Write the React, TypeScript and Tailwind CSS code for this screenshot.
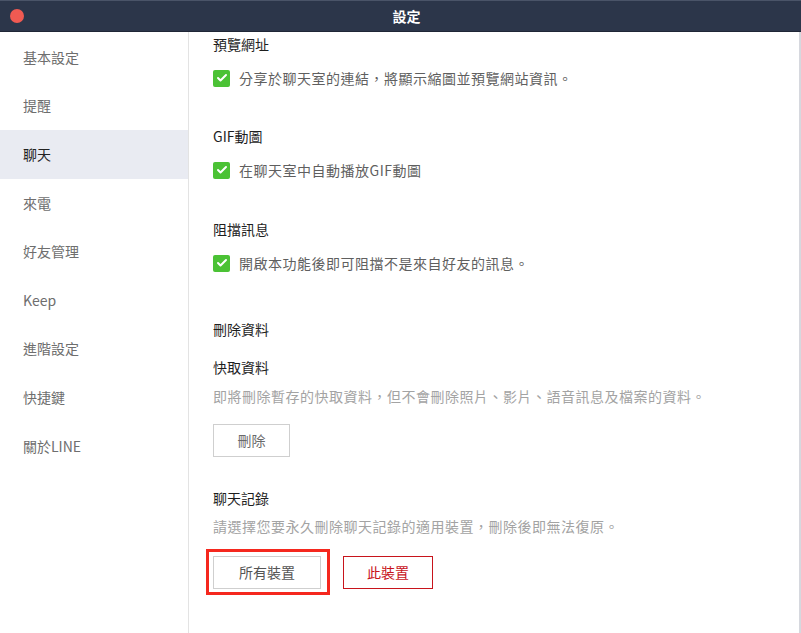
import { Check } from "lucide-react";

const menu = ["基本設定", "提醒", "聊天", "來電", "好友管理", "Keep", "進階設定", "快捷鍵", "關於LINE"];

const CheckRow = ({ text }: { text: string }) => (
    <div className="flex items-center gap-[9px] leading-[20px]">
        <span className="w-[17px] h-[17px] rounded-[2px] bg-[#4bc235] flex items-center justify-center">
            <Check className="w-[12px] h-[12px] text-white" strokeWidth={4} />
        </span>
        <span className="text-[14px] text-[#5f5f5f] tracking-[0.5px]">{text}</span>
    </div>
);

const App = () => {
    return (
        <div
            className="w-[801px] h-[633px] flex flex-col bg-white overflow-hidden relative"
            style={{ fontFamily: '"Noto Sans CJK TC", "Noto Sans", sans-serif' }}
        >
            {/* TITLE BAR */}
            <div className="h-[32px] shrink-0 bg-[#2c364a] border-t border-[#4a5468] border-b border-b-[#1f2636] flex items-center relative">
                <span className="ml-[10px] w-[14px] h-[14px] rounded-full bg-[#f05a52]" />
                <div className="absolute left-0 right-0 text-center text-white text-[14px] font-bold pl-[12px]">設定</div>
            </div>

            <div className="flex flex-1 min-h-0 border-r-2 border-[#d6d8de]">
                {/* SIDEBAR */}
                <div className="w-[189px] shrink-0 border-r border-[#e3e3e3] flex flex-col pt-px">
                    {menu.map((m) => (
                        <div
                            key={m}
                            className={
                                m === "聊天"
                                    ? "h-[48.6px] flex items-center pl-[23px] text-[14px] bg-[#e9ebf2] text-[#222]"
                                    : "h-[48.6px] flex items-center pl-[23px] text-[14px] text-[#6e6e6e]"
                            }
                        >
                            {m}
                        </div>
                    ))}
                </div>

                {/* CONTENT */}
                <div className="flex-1 pl-[24px] flex flex-col text-[#1e1e1e]">
                    <div className="text-[14px] leading-[20px] mt-[2px]">預覽網址</div>
                    <div className="mt-[14px]">
                        <CheckRow text="分享於聊天室的連結，將顯示縮圖並預覽網站資訊。" />
                    </div>

                    <div className="text-[14px] leading-[20px] mt-[38px]">GIF動圖</div>
                    <div className="mt-[14px]">
                        <CheckRow text="在聊天室中自動播放GIF動圖" />
                    </div>

                    <div className="text-[14px] leading-[20px] mt-[39px]">阻擋訊息</div>
                    <div className="mt-[14px]">
                        <CheckRow text="開啟本功能後即可阻擋不是來自好友的訊息。" />
                    </div>

                    <div className="text-[14px] leading-[20px] mt-[46px]">刪除資料</div>
                    <div className="text-[14px] leading-[20px] mt-[18px]">快取資料</div>
                    <div className="text-[14px] text-[#a3a3a3] leading-[20px] mt-[9px] tracking-[0.5px]">
                        即將刪除暫存的快取資料，但不會刪除照片、影片、語音訊息及檔案的資料。
                    </div>
                    <button
                        type="button"
                        className="mt-[18px] w-[77px] h-[33px] border border-[#cfcfcf] text-[14px] text-[#6a6a6a] bg-white"
                    >
                        刪除
                    </button>

                    <div className="text-[14px] leading-[20px] mt-[31px]">聊天記錄</div>
                    <div className="text-[14px] text-[#a3a3a3] leading-[20px] mt-[8px] tracking-[0.5px]">
                        請選擇您要永久刪除聊天記錄的適用裝置，刪除後即無法復原。
                    </div>
                    <div className="flex items-center gap-[13px] mt-[13px] -ml-[7px]">
                        <div className="border-[3px] border-[#f5281e] pt-[4px] pl-[4px] pr-[6px] pb-[3px]">
                            <button
                                type="button"
                                className="w-[108px] h-[33px] border border-[#cfcfcf] text-[14px] text-[#555] bg-white block"
                            >
                                所有裝置
                            </button>
                        </div>
                        <button
                            type="button"
                            className="w-[90px] h-[33px] border border-[#c8141c] text-[14px] text-[#c8141c] bg-white"
                        >
                            此裝置
                        </button>
                    </div>
                </div>
            </div>
        </div>
    );
};

export default App;
